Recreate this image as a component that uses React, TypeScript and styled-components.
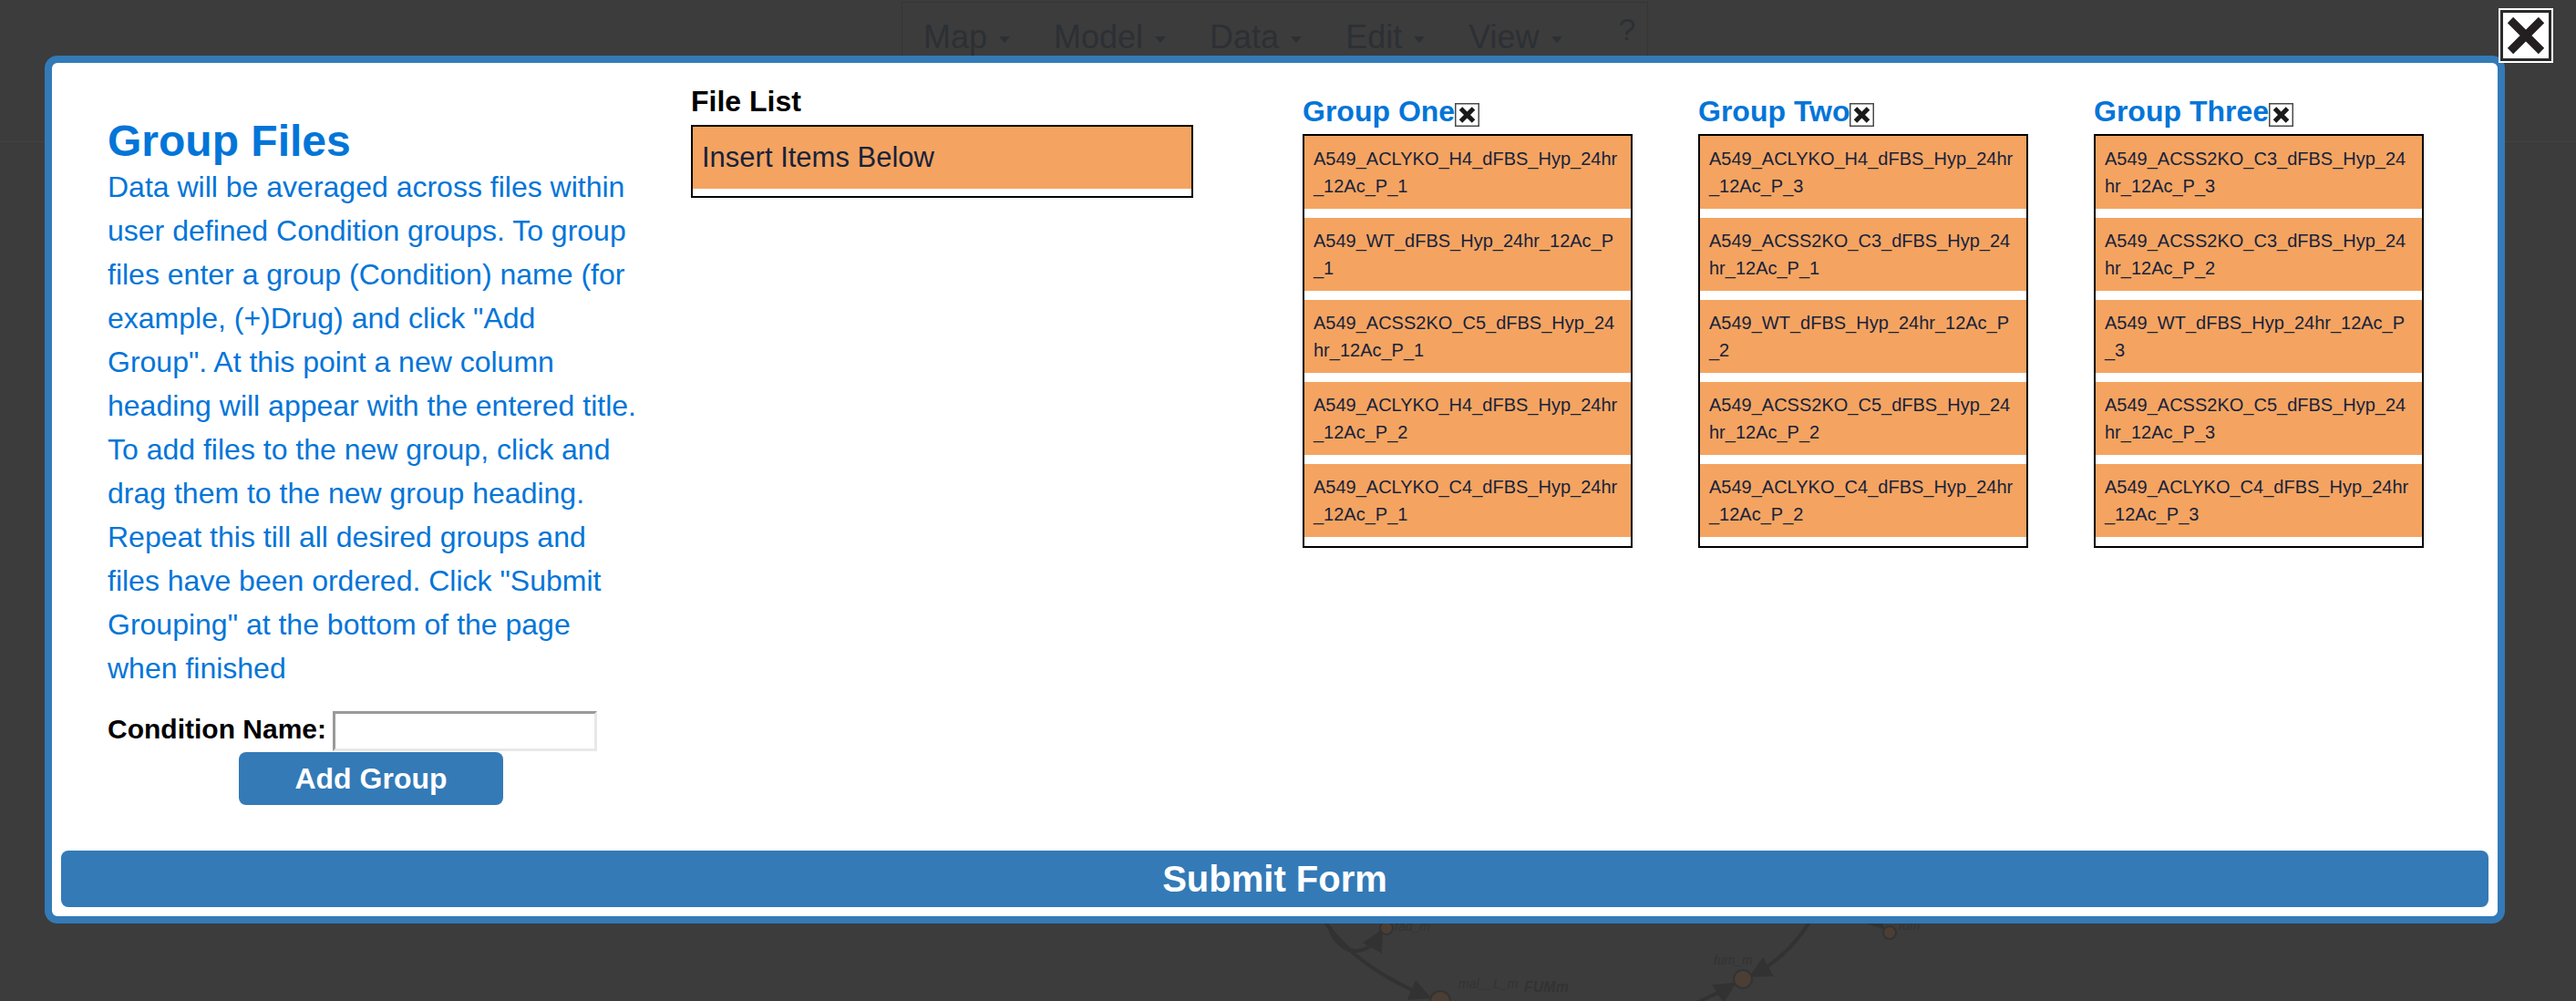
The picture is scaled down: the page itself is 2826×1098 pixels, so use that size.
import React from 'react'
import styled, { createGlobalStyle } from 'styled-components'

const GlobalStyle = createGlobalStyle`
  html, body {
    margin: 0;
    padding: 0;
  }
  body {
    width: 2826px;
    height: 1098px;
    overflow: hidden;
    background: #3c3c3c;
    font-family: "Liberation Sans", Arial, Helvetica, sans-serif;
  }
`

const BLUE = '#337ab7'
const TEXT_BLUE = '#0275d8'
const ITEM_TEXT = '#17223c'

const groups = [
  {
    name: 'Group One',
    files: [
      'A549_ACLYKO_H4_dFBS_Hyp_24hr_12Ac_P_1',
      'A549_WT_dFBS_Hyp_24hr_12Ac_P_1',
      'A549_ACSS2KO_C5_dFBS_Hyp_24hr_12Ac_P_1',
      'A549_ACLYKO_H4_dFBS_Hyp_24hr_12Ac_P_2',
      'A549_ACLYKO_C4_dFBS_Hyp_24hr_12Ac_P_1',
    ],
  },
  {
    name: 'Group Two',
    files: [
      'A549_ACLYKO_H4_dFBS_Hyp_24hr_12Ac_P_3',
      'A549_ACSS2KO_C3_dFBS_Hyp_24hr_12Ac_P_1',
      'A549_WT_dFBS_Hyp_24hr_12Ac_P_2',
      'A549_ACSS2KO_C5_dFBS_Hyp_24hr_12Ac_P_2',
      'A549_ACLYKO_C4_dFBS_Hyp_24hr_12Ac_P_2',
    ],
  },
  {
    name: 'Group Three',
    files: [
      'A549_ACSS2KO_C3_dFBS_Hyp_24hr_12Ac_P_3',
      'A549_ACSS2KO_C3_dFBS_Hyp_24hr_12Ac_P_2',
      'A549_WT_dFBS_Hyp_24hr_12Ac_P_3',
      'A549_ACSS2KO_C5_dFBS_Hyp_24hr_12Ac_P_3',
      'A549_ACLYKO_C4_dFBS_Hyp_24hr_12Ac_P_3',
    ],
  },
]

const menus = ['Map', 'Model', 'Data', 'Edit', 'View']

export default function App() {
  return (
    <Page>
      <GlobalStyle />
      <Header>
        <MenuBar>
          {menus.map(m => (
            <MenuItem key={m}>
              {m}
              <Caret />
            </MenuItem>
          ))}
          <Help>?</Help>
        </MenuBar>
      </Header>
      <MapCanvas />

      <Modal>
        <ModalBody>
          <Intro>
            <Title>Group Files</Title>
            <HelpText>
              Data will be averaged across files within user defined Condition groups. To group
              files enter a group (Condition) name (for example, (+)Drug) and click "Add
              Group". At this point a new column heading will appear with the entered title.
              To add files to the new group, click and drag them to the new group heading.
              Repeat this till all desired groups and files have been ordered. Click "Submit
              Grouping" at the bottom of the page when finished
            </HelpText>
            <ConditionRow>
              <Label>Condition Name:</Label>
              <NameInput type="text" />
            </ConditionRow>
            <AddButton>Add Group</AddButton>
          </Intro>

          <FileColumn>
            <ColumnTitle>File List</ColumnTitle>
            <ListBox>
              <Item $big>Insert Items Below</Item>
            </ListBox>
          </FileColumn>

          <Groups>
            {groups.map(g => (
              <GroupColumn key={g.name}>
                <GroupHeader>
                  <GroupName>{g.name}</GroupName>
                  <RemoveIcon />
                </GroupHeader>
                <ListBox>
                  {g.files.map(f => (
                    <Item key={f}>{f}</Item>
                  ))}
                </ListBox>
              </GroupColumn>
            ))}
          </Groups>
        </ModalBody>
        <SubmitButton>Submit Form</SubmitButton>
      </Modal>

      <CloseButton aria-label="close">
        <svg width="60" height="60" viewBox="0 0 60 60">
          <rect x="3.5" y="3.5" width="53" height="53" fill="#fff" stroke="#2a2a2a" strokeWidth="3" />
          <path d="M13 13 L47 47 M47 13 L13 47" stroke="#231f20" strokeWidth="9" />
        </svg>
      </CloseButton>
    </Page>
  )
}

function RemoveIcon() {
  return (
    <SmallX width="27" height="26" viewBox="0 0 27 26">
      <rect x="0.75" y="0.75" width="25.5" height="24.5" fill="#fff" stroke="#4a4a4a" strokeWidth="1.5" />
      <path d="M6.5 6 L20.5 20 M20.5 6 L6.5 20" stroke="#1a1a1a" strokeWidth="5" />
    </SmallX>
  )
}

// faint metabolic map behind the dialog
function MapCanvas() {
  return (
    <Canvas width="2826" height="944" viewBox="0 154 2826 944">
      <defs>
        <marker id="arr" markerWidth="6" markerHeight="6" refX="4" refY="3" orient="auto">
          <path d="M0 0 L6 3 L0 6 z" fill="#323232" />
        </marker>
      </defs>
      <g stroke="#323232" strokeWidth="4" fill="none">
        <path d="M1440 985 C1465 1040 1520 1072 1563 1090" markerEnd="url(#arr)" />
        <path d="M1458 1015 C1470 1048 1500 1048 1513 1024" markerEnd="url(#arr)" />
        <path d="M1998 985 C1980 1025 1955 1050 1926 1066" markerEnd="url(#arr)" />
        <path d="M1850 1104 C1865 1095 1885 1088 1898 1080" markerEnd="url(#arr)" />
        <path d="M2045 995 L2062 1012" markerEnd="url(#arr)" />
      </g>
      <g fill="#4a3e35" stroke="#333" strokeWidth="2">
        <circle cx="1521" cy="1016" r="7" />
        <circle cx="1580" cy="1096" r="11" />
        <circle cx="1912" cy="1072" r="10" />
        <circle cx="2073" cy="1021" r="7" />
      </g>
      <g fill="#333" fontFamily="Liberation Sans, Arial, sans-serif" fontStyle="italic">
        <text x="1530" y="1019" fontSize="14">fad_m</text>
        <text x="1600" y="1082" fontSize="14">mal__L_m</text>
        <text x="1672" y="1086" fontSize="16" fontWeight="bold">FUMm</text>
        <text x="1880" y="1056" fontSize="14">fum_m</text>
        <text x="2083" y="1018" fontSize="14">fum</text>
      </g>
    </Canvas>
  )
}

const Page = styled.div`
  position: relative;
  width: 2826px;
  height: 1098px;
  overflow: hidden;
`

const Header = styled.div`
  height: 153px;
  border-bottom: 1px solid #444;
  box-sizing: content-box;
`

const MenuBar = styled.div`
  margin-left: 989px;
  margin-top: 2px;
  width: 819px;
  height: 80px;
  box-sizing: border-box;
  border: 1px solid #353535;
  display: flex;
  align-items: flex-start;
  gap: 48px;
  padding: 17px 0 0 23px;
`

const MenuItem = styled.div`
  display: flex;
  align-items: center;
  font-size: 36px;
  line-height: 41px;
  color: #2c3035;
`

const Caret = styled.span`
  width: 0;
  height: 0;
  margin-left: 13px;
  margin-top: 6px;
  border-top: 7px solid #2c3035;
  border-left: 6px solid transparent;
  border-right: 6px solid transparent;
`

const Help = styled.div`
  margin-left: 14px;
  margin-top: -8px;
  font-size: 34px;
  line-height: 41px;
  color: #2c3035;
`

const Canvas = styled.svg`
  display: block;
`

const Modal = styled.div`
  position: absolute;
  left: 49px;
  top: 61px;
  width: 2699px;
  height: 952px;
  box-sizing: border-box;
  border: 8px solid ${BLUE};
  border-radius: 14px;
  background: #fff;
  display: flex;
  flex-direction: column;
`

const ModalBody = styled.div`
  flex: 1;
  display: flex;
  align-items: flex-start;
  padding-left: 61px;
`

const Intro = styled.div`
  width: 584px;
  padding-top: 59px;
  flex-shrink: 0;
`

const Title = styled.h2`
  margin: 0;
  font-size: 48px;
  line-height: 53px;
  font-weight: bold;
  color: ${TEXT_BLUE};
`

const HelpText = styled.p`
  margin: 0;
  font-size: 32px;
  line-height: 48px;
  color: ${TEXT_BLUE};
`

const ConditionRow = styled.div`
  display: flex;
  align-items: center;
  gap: 7px;
  margin-top: 23px;
  height: 44px;
`

const Label = styled.span`
  font-size: 30px;
  line-height: 30px;
  font-weight: bold;
  color: #000;
  margin-bottom: 4px;
`

const NameInput = styled.input`
  width: 290px;
  height: 44px;
  box-sizing: border-box;
  border-style: solid;
  border-width: 3px;
  border-color: #9a9a9a #e8e8e8 #e8e8e8 #9a9a9a;
  background: #fff;
  outline: none;
  padding: 0 4px;
  font-size: 24px;
`

const AddButton = styled.button`
  display: block;
  margin: 1px 0 0 144px;
  width: 290px;
  height: 58px;
  border: none;
  border-radius: 8px;
  background: ${BLUE};
  color: #fff;
  font-family: inherit;
  font-size: 32px;
  font-weight: bold;
  padding: 0;
`

const FileColumn = styled.div`
  margin-left: 56px;
  width: 551px;
  padding-top: 24px;
  flex-shrink: 0;
`

const ColumnTitle = styled.div`
  font-size: 32px;
  line-height: 37px;
  font-weight: bold;
  color: #000;
  margin-bottom: 7px;
`

const ListBox = styled.div`
  border: 2px solid #000;
  background: #fff;
`

const Item = styled.div<{ $big?: boolean }>`
  background: sandybrown;
  color: ${ITEM_TEXT};
  word-break: break-all;
  font-size: ${p => (p.$big ? '31px' : '20px')};
  line-height: ${p => (p.$big ? '36px' : '30px')};
  padding: ${p => (p.$big ? '16px 10px' : '10px 10px')};
  margin-bottom: ${p => (p.$big ? '8px' : '10px')};
`

const Groups = styled.div`
  margin-left: 120px;
  padding-top: 35px;
  display: flex;
  gap: 72px;
`

const GroupColumn = styled.div`
  width: 362px;
`

const GroupHeader = styled.div`
  display: flex;
  align-items: center;
  height: 37px;
  margin-bottom: 6px;
`

const GroupName = styled.span`
  font-size: 32px;
  line-height: 37px;
  font-weight: bold;
  color: ${TEXT_BLUE};
`

const SmallX = styled.svg`
  display: block;
  margin-top: 7px;
`

const SubmitButton = styled.button`
  margin: 0 10px 10px;
  height: 62px;
  border: none;
  border-radius: 8px;
  background: ${BLUE};
  color: #fff;
  font-family: inherit;
  font-size: 40px;
  font-weight: bold;
  padding: 0;
`

const CloseButton = styled.button`
  position: absolute;
  left: 2741px;
  top: 9px;
  width: 60px;
  height: 60px;
  padding: 0;
  border: none;
  background: #fff;
  svg {
    display: block;
  }
`
